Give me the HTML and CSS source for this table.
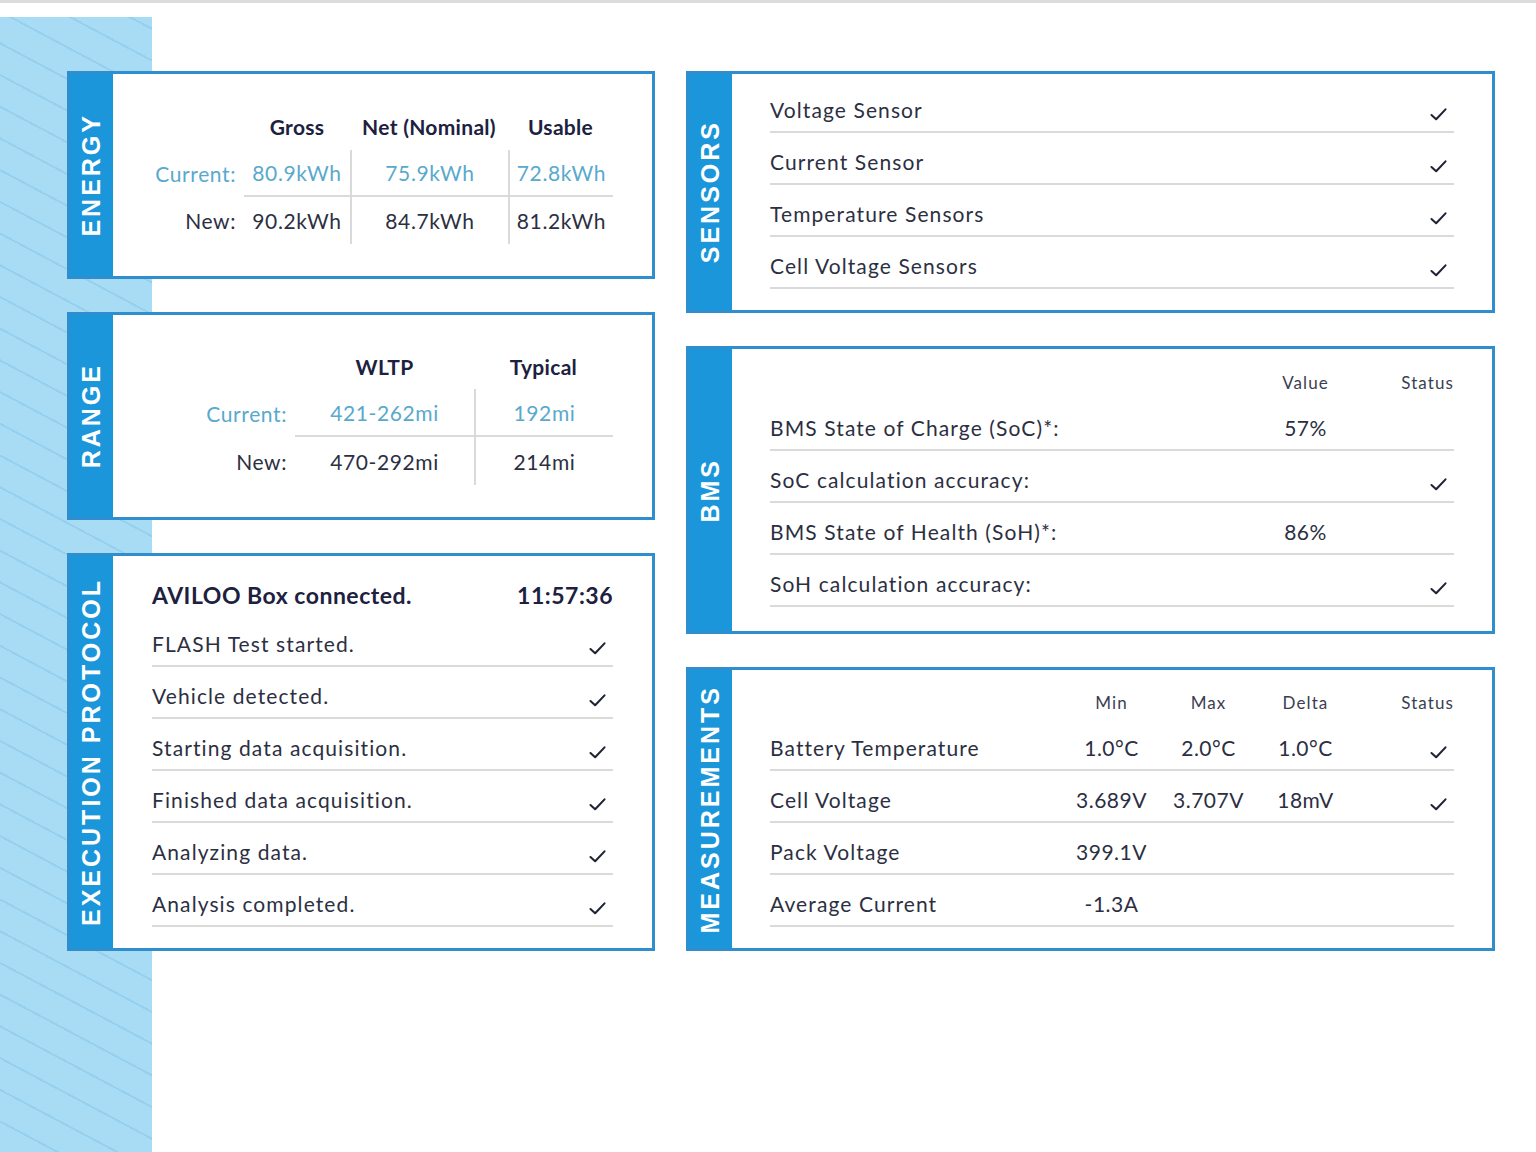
FILE: index.html
```html
<!DOCTYPE html>
<html>
<head>
<meta charset="utf-8">
<link rel="stylesheet" href="styles.css">
</head>
<body>
<div class="topline"></div>
<div class="page">
  <div class="col col-left">
    <section class="card card-energy">
      <div class="tab"><span>ENERGY</span></div>
      <div class="body">
        <div class="tbl tbl-energy">
          <div class="c"></div>
          <div class="c hd">Gross</div>
          <div class="c hd">Net (Nominal)</div>
          <div class="c hd">Usable</div>
          <div class="c lbl cur">Current:</div>
          <div class="c val cur hl">80.9kWh</div>
          <div class="c val cur hl vl">75.9kWh</div>
          <div class="c val cur hl vl">72.8kWh</div>
          <div class="c lbl">New:</div>
          <div class="c val">90.2kWh</div>
          <div class="c val vl">84.7kWh</div>
          <div class="c val vl">81.2kWh</div>
        </div>
      </div>
    </section>
    <section class="card card-range">
      <div class="tab"><span>RANGE</span></div>
      <div class="body">
        <div class="tbl tbl-range">
          <div class="c"></div>
          <div class="c hd">WLTP</div>
          <div class="c hd">Typical</div>
          <div class="c lbl cur">Current:</div>
          <div class="c val cur hl">421-262mi</div>
          <div class="c val cur hl vl">192mi</div>
          <div class="c lbl">New:</div>
          <div class="c val">470-292mi</div>
          <div class="c val vl">214mi</div>
        </div>
      </div>
    </section>
    <section class="card card-exec">
      <div class="tab"><span>EXECUTION PROTOCOL</span></div>
      <div class="body list list-exec">
        <div class="exec-head"><span>AVILOO Box connected.</span><span>11:57:36</span></div>
        <div class="row"><span>FLASH Test started.</span><svg class="chk" viewBox="0 0 20 16"><path d="M2.5 8.5 L7.5 13 L17.5 2.5"/></svg></div>
        <div class="row"><span>Vehicle detected.</span><svg class="chk" viewBox="0 0 20 16"><path d="M2.5 8.5 L7.5 13 L17.5 2.5"/></svg></div>
        <div class="row"><span>Starting data acquisition.</span><svg class="chk" viewBox="0 0 20 16"><path d="M2.5 8.5 L7.5 13 L17.5 2.5"/></svg></div>
        <div class="row"><span>Finished data acquisition.</span><svg class="chk" viewBox="0 0 20 16"><path d="M2.5 8.5 L7.5 13 L17.5 2.5"/></svg></div>
        <div class="row"><span>Analyzing data.</span><svg class="chk" viewBox="0 0 20 16"><path d="M2.5 8.5 L7.5 13 L17.5 2.5"/></svg></div>
        <div class="row"><span>Analysis completed.</span><svg class="chk" viewBox="0 0 20 16"><path d="M2.5 8.5 L7.5 13 L17.5 2.5"/></svg></div>
      </div>
    </section>
  </div>
  <div class="col col-right">
    <section class="card card-sensors">
      <div class="tab"><span>SENSORS</span></div>
      <div class="body list list-sensors">
        <div class="row"><span>Voltage Sensor</span><svg class="chk" viewBox="0 0 20 16"><path d="M2.5 8.5 L7.5 13 L17.5 2.5"/></svg></div>
        <div class="row"><span>Current Sensor</span><svg class="chk" viewBox="0 0 20 16"><path d="M2.5 8.5 L7.5 13 L17.5 2.5"/></svg></div>
        <div class="row"><span>Temperature Sensors</span><svg class="chk" viewBox="0 0 20 16"><path d="M2.5 8.5 L7.5 13 L17.5 2.5"/></svg></div>
        <div class="row"><span>Cell Voltage Sensors</span><svg class="chk" viewBox="0 0 20 16"><path d="M2.5 8.5 L7.5 13 L17.5 2.5"/></svg></div>
      </div>
    </section>
    <section class="card card-bms">
      <div class="tab"><span>BMS</span></div>
      <div class="body list list-bms">
        <div class="ghead g-bms"><span></span><span class="ctr">Value</span><span class="rt">Status</span></div>
        <div class="row g-bms"><span>BMS State of Charge (SoC)*:</span><span class="ctr">57%</span><span></span></div>
        <div class="row g-bms"><span>SoC calculation accuracy:</span><span></span><span class="rt"><svg class="chk" viewBox="0 0 20 16"><path d="M2.5 8.5 L7.5 13 L17.5 2.5"/></svg></span></div>
        <div class="row g-bms"><span>BMS State of Health (SoH)*:</span><span class="ctr">86%</span><span></span></div>
        <div class="row g-bms"><span>SoH calculation accuracy:</span><span></span><span class="rt"><svg class="chk" viewBox="0 0 20 16"><path d="M2.5 8.5 L7.5 13 L17.5 2.5"/></svg></span></div>
      </div>
    </section>
    <section class="card card-meas">
      <div class="tab"><span>MEASUREMENTS</span></div>
      <div class="body list list-meas">
        <div class="ghead g-meas"><span></span><span class="ctr">Min</span><span class="ctr">Max</span><span class="ctr">Delta</span><span class="rt">Status</span></div>
        <div class="row g-meas"><span>Battery Temperature</span><span class="ctr">1.0°C</span><span class="ctr">2.0°C</span><span class="ctr">1.0°C</span><span class="rt"><svg class="chk" viewBox="0 0 20 16"><path d="M2.5 8.5 L7.5 13 L17.5 2.5"/></svg></span></div>
        <div class="row g-meas"><span>Cell Voltage</span><span class="ctr">3.689V</span><span class="ctr">3.707V</span><span class="ctr">18mV</span><span class="rt"><svg class="chk" viewBox="0 0 20 16"><path d="M2.5 8.5 L7.5 13 L17.5 2.5"/></svg></span></div>
        <div class="row g-meas"><span>Pack Voltage</span><span class="ctr">399.1V</span><span></span><span></span><span></span></div>
        <div class="row g-meas"><span>Average Current</span><span class="ctr">-1.3A</span><span></span><span></span><span></span></div>
      </div>
    </section>
  </div>
</div>
</body>
</html>
```
FILE: styles.css
```css
* { box-sizing: border-box; }
html, body { margin: 0; padding: 0; background: #ffffff; }
body {
  font-family: "Lato", "Liberation Sans", sans-serif;
  color: #2c2f42;
  font-size: 21px;
  letter-spacing: 1.1px;
  width: 1536px;
  height: 1152px;
  overflow: hidden;
}
.topline { height: 3px; background: #dcdcdc; }
.page {
  margin-top: 14px;
  height: 1135px;
  padding: 54px 0 0 67px;
  display: flex;
  gap: 31px;
  background-color: #ffffff;
  background-image: repeating-linear-gradient(28deg, #a8dcf5 0px, #a8dcf5 26px, #95d0ee 26px, #95d0ee 28px);
  background-size: 152px 100%;
  background-repeat: no-repeat;
}
.col { display: flex; flex-direction: column; }
.col-left { width: 588px; gap: 33px; }
.col-right { width: 809px; gap: 33px; }

.card {
  display: flex;
  border: 3px solid #2f8ecd;
  background: #ffffff;
}
.card-energy { height: 208px; }
.card-range { height: 208px; }
.card-exec { height: 398px; }
.card-sensors { height: 242px; }
.card-bms { height: 288px; }
.card-meas { height: 284px; }

.tab {
  width: 43px;
  flex: none;
  background: #1b96db;
  display: flex;
  align-items: center;
  justify-content: center;
}
.tab span {
  writing-mode: vertical-rl;
  transform: rotate(180deg);
  font-family: "Liberation Sans", Arial, sans-serif;
  font-weight: 700;
  font-size: 25px;
  letter-spacing: 3px;
  color: #ffffff;
  line-height: 1;
}
.body { flex: 1; }

/* tables */
.tbl { display: grid; }
.tbl-energy {
  margin: 29px 0 0 37px;
  grid-template-columns: 94px 106px 158px 105px;
  grid-template-rows: 47px 47px 47px;
}
.tbl-range {
  margin: 29px 0 0 37px;
  grid-template-columns: 145px 179px 139px;
  grid-template-rows: 45px 48px 48px;
}
.c { display: flex; align-items: center; justify-content: center; white-space: nowrap; }
.hd { font-weight: 700; color: #1d2140; font-size: 21px; letter-spacing: 0.3px; }
.lbl { justify-content: flex-end; padding-right: 8px; }
.cur { color: #58a9cc; }
.hl { border-bottom: 2px solid #dadada; }
.vl { border-left: 2px solid #dadada; }
.tbl .val, .tbl .lbl { letter-spacing: 0.6px; }

/* lists */
.list { display: flex; flex-direction: column; }
.list-exec { padding: 19px 39px 0 39px; }
.list-sensors { padding: 7px 38px 0 38px; }
.list-bms { padding: 16px 38px 0 38px; }
.list-meas { padding: 15px 38px 0 38px; }

.exec-head {
  height: 40px;
  display: flex;
  justify-content: space-between;
  align-items: center;
  font-size: 23px;
  font-weight: 700;
  letter-spacing: 0.5px;
  color: #1d2140;
}
.row {
  height: 52px;
  padding-top: 6px;
  border-bottom: 2px solid #dadada;
  display: flex;
  justify-content: space-between;
  align-items: center;
  white-space: nowrap;
}
.chk {
  width: 19px;
  height: 15px;
  margin-top: 11px;
  margin-right: 6px;
  fill: none;
  stroke: #1e2235;
  stroke-width: 2.2;
  stroke-linecap: round;
  stroke-linejoin: round;
}
.ghead {
  height: 34px;
  align-items: center;
  font-size: 17px;
  color: #3b3e52;
}
.g-bms { display: grid; grid-template-columns: 1fr 97px 100px; }
.g-meas { display: grid; grid-template-columns: 1fr 97px 97px 97px 100px; }
.ctr { text-align: center; }
.rt { text-align: right; }
.row .ctr { letter-spacing: 0.5px; }
.row .rt { display: flex; justify-content: flex-end; }
.row .rt .chk { margin-right: 6px; }
```
